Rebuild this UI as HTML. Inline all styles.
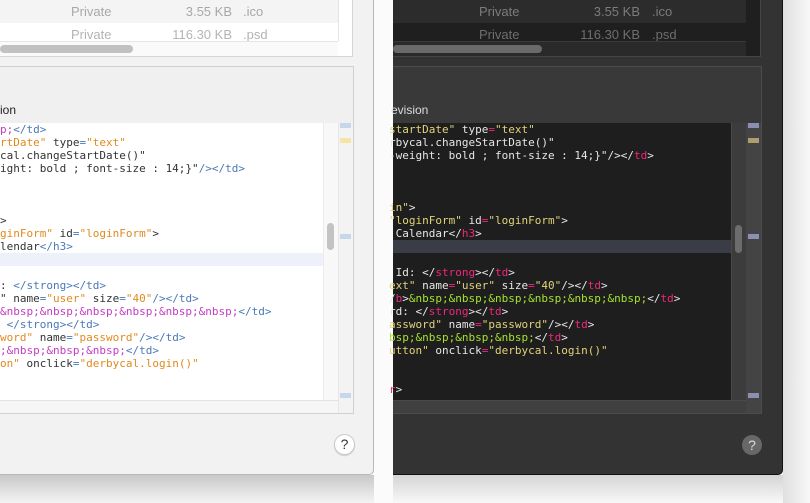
<!DOCTYPE html>
<html><head><meta charset="utf-8"><style>
*{margin:0;padding:0;box-sizing:border-box}
body{width:810px;height:503px;overflow:hidden;background:#f7f7f7;position:relative;font-family:"Liberation Sans",sans-serif}
.a{position:absolute}
.code{font-family:"DejaVu Sans Mono","Liberation Mono",monospace;font-size:11px;line-height:13px;overflow:hidden}
.code div{height:13px;white-space:pre}
.L{color:#333}.L .t{color:#4a78b8}.L .v{color:#e08a1e}.L .e{color:#c43cc4}
.D{color:#e6e6e6}.D .t{color:#f0287a}.D .v{color:#e0d27a}.D .e{color:#a6e22e}
</style></head><body>
<div class="a" style="left:0;top:475px;width:374px;height:28px;background:linear-gradient(#c8c8c8,#f4f4f4)"></div>
<div class="a" style="left:393px;top:475px;width:390px;height:28px;background:linear-gradient(#d4d4d4,#f8f8f8)"></div>
<div class="a" style="left:374px;top:0;width:19px;height:503px;background:#fbfbfb"></div>
<div class="a" style="left:783px;top:0;width:27px;height:503px;background:linear-gradient(90deg,#e0e0e0,#f8f8f8)"></div>

<div class="a" style="left:0;top:0;width:374px;height:475px;background:#f2f2f2;border-right:1px solid #b8b8b8;border-bottom:1px solid #b8b8b8;border-bottom-right-radius:5px"></div>
<div class="a" style="left:0;top:0;width:353px;height:57px;background:#fff;border-bottom:1px solid #d6d6d6;border-right:1px solid #d6d6d6"></div>
<div class="a" style="left:0;top:0;width:338px;height:23px;background:#f4f4f4"></div>
<div class="a" style="left:338px;top:0;width:1px;height:41px;background:#e4e4e4"></div>
<div class="a" style="left:0;top:41px;width:338px;height:15px;background:#fafafa;border-top:1px solid #e6e6e6"></div>
<div class="a" style="left:0;top:45px;width:133px;height:8px;background:#c1c1c1;border-radius:4px"></div>
<div class="a" style="left:71px;top:4px;font-size:13px;color:#a8a8a8">Private</div>
<div class="a" style="left:140px;top:4px;width:92px;text-align:right;font-size:13px;color:#a8a8a8">3.55 KB</div>
<div class="a" style="left:243px;top:4px;font-size:13px;color:#a8a8a8">.ico</div>
<div class="a" style="left:71px;top:27px;font-size:13px;color:#b4b4b4;height:14px;overflow:hidden">Private</div>
<div class="a" style="left:140px;top:27px;width:92px;text-align:right;font-size:13px;color:#b4b4b4;height:14px;overflow:hidden">116.30 KB</div>
<div class="a" style="left:243px;top:27px;font-size:13px;color:#b4b4b4;height:14px;overflow:hidden">.psd</div>

<div class="a" style="left:0;top:66px;width:354px;height:348px;background:#f0f0f0;border:1px solid #d0d0d0;border-left:none"></div>
<div class="a" style="left:0;top:103px;font-size:12px;color:#222">ion</div>
<div class="a" style="left:0;top:123px;width:323px;height:277px;background:#fff"></div>
<div class="a" style="left:0;top:253px;width:323px;height:13px;background:#edf2fa"></div>
<div class="a" style="left:323px;top:123px;width:15px;height:277px;background:#f8f8f8;border-left:1px solid #ececec"></div>
<div class="a" style="left:327px;top:223px;width:7px;height:27px;background:#c3c3c3;border-radius:4px"></div>
<div class="a" style="left:338px;top:123px;width:15px;height:290px;background:#f3f3f3;border-left:1px solid #e6e6e6"></div>
<div class="a" style="left:340px;top:123px;width:11px;height:5px;background:#c6d6eb"></div>
<div class="a" style="left:340px;top:138px;width:11px;height:5px;background:#f6e3a6"></div>
<div class="a" style="left:340px;top:234px;width:11px;height:5px;background:#c6d6eb"></div>
<div class="a" style="left:340px;top:393px;width:11px;height:5px;background:#c6d6eb"></div>
<div class="a" style="left:0;top:400px;width:338px;height:13px;background:#f6f6f6;border-top:1px solid #e4e4e4"></div>
<div class="a code L" style="left:0;top:123px;width:323px;height:277px"><div><span class="e">p;</span><span class="t">&lt;/td&gt;</span></div><div><span class="v">rtDate"</span> type<span class="t">=</span><span class="v">"text"</span></div><div>cal.changeStartDate()"</div><div>ight: bold ; font-size : 14;}"<span class="t">/&gt;&lt;/td&gt;</span></div><div></div><div></div><div></div><div>&gt;</div><div><span class="v">ginForm"</span> id<span class="t">=</span><span class="v">"loginForm"</span>&gt;</div><div>lendar<span class="t">&lt;/h3&gt;</span></div><div></div><div></div><div>: <span class="t">&lt;/strong&gt;&lt;/td&gt;</span></div><div>" name<span class="t">=</span><span class="v">"user"</span> size<span class="t">=</span><span class="v">"40"</span><span class="t">/&gt;&lt;/td&gt;</span></div><div><span class="e">&amp;nbsp;&amp;nbsp;&amp;nbsp;&amp;nbsp;&amp;nbsp;&amp;nbsp;</span><span class="t">&lt;/td&gt;</span></div><div> <span class="t">&lt;/strong&gt;&lt;/td&gt;</span></div><div><span class="v">word"</span> name<span class="t">=</span><span class="v">"password"</span><span class="t">/&gt;&lt;/td&gt;</span></div><div><span class="e">;&amp;nbsp;&amp;nbsp;&amp;nbsp;</span><span class="t">&lt;/td&gt;</span></div><div><span class="v">on"</span> onclick<span class="t">=</span><span class="v">"derbycal.login()"</span></div></div>
<div class="a" style="left:334px;top:434px;width:21px;height:21px;border-radius:50%;background:#fff;border:1px solid #c8c8c8;box-shadow:0 1px 1px rgba(0,0,0,.15);text-align:center;font-size:14px;line-height:19px;color:#333">?</div>

<div class="a" style="left:393px;top:0;width:390px;height:475px;background:#333;border-right:1px solid #111;border-bottom:1px solid #111;border-bottom-right-radius:5px"></div>
<div class="a" style="left:393px;top:0;width:368px;height:57px;background:#1f1f1f;border-bottom:1px solid #454545;border-right:1px solid #454545"></div>
<div class="a" style="left:393px;top:0;width:353px;height:23px;background:#2c2c2c"></div>
<div class="a" style="left:393px;top:41px;width:353px;height:15px;background:#2a2a2a;border-top:1px solid #3a3a3a"></div>
<div class="a" style="left:393px;top:45px;width:149px;height:8px;background:#6a6a6a;border-radius:4px"></div>
<div class="a" style="left:479px;top:4px;font-size:13px;color:#7c7c7c">Private</div>
<div class="a" style="left:540px;top:4px;width:100px;text-align:right;font-size:13px;color:#7c7c7c">3.55 KB</div>
<div class="a" style="left:652px;top:4px;font-size:13px;color:#7c7c7c">.ico</div>
<div class="a" style="left:479px;top:27px;font-size:13px;color:#6e6e6e;height:14px;overflow:hidden">Private</div>
<div class="a" style="left:540px;top:27px;width:100px;text-align:right;font-size:13px;color:#6e6e6e;height:14px;overflow:hidden">116.30 KB</div>
<div class="a" style="left:652px;top:27px;font-size:13px;color:#6e6e6e;height:14px;overflow:hidden">.psd</div>

<div class="a" style="left:393px;top:66px;width:369px;height:348px;background:#393939;border:1px solid #4c4c4c;border-left:none"></div>
<div class="a" style="left:391px;top:103px;font-size:12px;color:#ddd">evision</div>
<div class="a" style="left:393px;top:123px;width:338px;height:277px;background:#1e1e1e"></div>
<div class="a" style="left:393px;top:240px;width:338px;height:13px;background:#3a3d46"></div>
<div class="a" style="left:731px;top:123px;width:15px;height:290px;background:#3c3c3c;border-left:1px solid #4a4a4a"></div>
<div class="a" style="left:735px;top:225px;width:7px;height:28px;background:#6c6c6c;border-radius:4px"></div>
<div class="a" style="left:746px;top:123px;width:15px;height:290px;background:#444"></div>
<div class="a" style="left:748px;top:123px;width:11px;height:5px;background:#8c8fb0"></div>
<div class="a" style="left:748px;top:138px;width:11px;height:5px;background:#ae9e6e"></div>
<div class="a" style="left:748px;top:234px;width:11px;height:5px;background:#8c8fb0"></div>
<div class="a" style="left:748px;top:393px;width:11px;height:5px;background:#8c8fb0"></div>
<div class="a" style="left:393px;top:400px;width:353px;height:13px;background:#404040;border-top:1px solid #4a4a4a"></div>
<div class="a code D" style="left:389px;top:123px;width:342px;height:277px"><div><span class="v">startDate"</span> type<span class="t">=</span><span class="v">"text"</span></div><div>rbycal.changeStartDate()"</div><div>-weight: bold ; font-size : 14;}"/&gt;&lt;/<span class="t">td</span>&gt;</div><div></div><div></div><div></div><div><span class="v">in"</span>&gt;</div><div><span class="v">"loginForm"</span> id<span class="t">=</span><span class="v">"loginForm"</span>&gt;</div><div> Calendar&lt;/<span class="t">h3</span>&gt;</div><div></div><div></div><div> Id: &lt;/<span class="t">strong</span>&gt;&lt;/<span class="t">td</span>&gt;</div><div><span class="v">ext"</span> name<span class="t">=</span><span class="v">"user"</span> size<span class="t">=</span><span class="v">"40"</span>/&gt;&lt;/<span class="t">td</span>&gt;</div><div>/<span class="t">b</span>&gt;<span class="e">&amp;nbsp;&amp;nbsp;&amp;nbsp;&amp;nbsp;&amp;nbsp;&amp;nbsp;</span>&lt;/<span class="t">td</span>&gt;</div><div>rd: &lt;/<span class="t">strong</span>&gt;&lt;/<span class="t">td</span>&gt;</div><div><span class="v">assword"</span> name<span class="t">=</span><span class="v">"password"</span>/&gt;&lt;/<span class="t">td</span>&gt;</div><div><span class="e">bsp;&amp;nbsp;&amp;nbsp;&amp;nbsp;</span>&lt;/<span class="t">td</span>&gt;</div><div><span class="v">utton"</span> onclick<span class="t">=</span><span class="v">"derbycal.login()"</span></div><div></div><div></div><div><span class="t">r</span>&gt;</div></div>
<div class="a" style="left:742px;top:435px;width:20px;height:20px;border-radius:50%;background:#686868;text-align:center;font-size:14px;line-height:20px;color:#ddd">?</div>
</body></html>
